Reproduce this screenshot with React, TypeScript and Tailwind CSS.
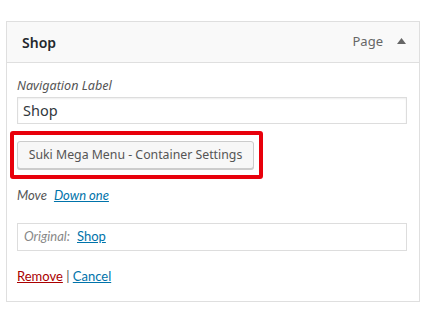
import React from 'react';

const font = { fontFamily: "'Noto Sans', 'Open Sans', sans-serif" };
const lato = { fontFamily: "Lato, 'Noto Sans', sans-serif" };

const MenuItemPanel = () => {
    return (
        <div className="min-h-[310px] bg-white pt-[21px] pl-[6px]" style={font}>
            <div className="w-[414px] border border-[#dfdfdf] bg-white">
                <div className="h-[41px] flex items-center justify-between bg-[#f9f9f9] border-b border-[#dfdfdf] pl-[15px] pr-[13px]">
                    <span className="text-[14px] font-semibold text-[#23282d]">Shop</span>
                    <div className="flex items-center gap-[14px]">
                        <span className="text-[13px] text-[#666]">Page</span>
                        <svg width="9" height="6" viewBox="0 0 9 6" className="mb-[2px]">
                            <path d="M0 6 L4.5 0 L9 6 Z" fill="#666" />
                        </svg>
                    </div>
                </div>

                <div className="px-[10px] pt-[13px] pb-[15px]">
                    <label className="block text-[12.6px] italic leading-[19px] text-[#555]">Navigation Label</label>
                    <div className="mt-[2px] h-[27px] w-[390px] border border-[#ddd] flex items-center px-[5px] text-[14.5px] text-[#32373c] shadow-[inset_0_1px_2px_rgba(0,0,0,0.07)]">
                        Shop
                    </div>

                    <div className="mt-[7px] -ml-[7px] w-[253px] border-[4px] border-[#e8000b] rounded-[3px] pt-[6px] pb-[6px] pl-[3px] pr-[5px]">
                        <button className="h-[28px] w-[237px] border border-[#ccc] rounded-[3px] bg-[#f7f7f7] text-[12.3px] text-[#555] shadow-[0_1px_0_#ccc]">
                            Suki Mega Menu - Container Settings
                        </button>
                    </div>

                    <p className="mt-[6px] text-[13px] leading-[20px] italic text-[#555]" style={lato}>
                        Move <a href="#" className="ml-[4px] text-[#0073aa] underline">Down one</a>
                    </p>

                    <div className="mt-[18px] h-[28px] w-[390px] border border-[#ddd] flex items-center px-[6px] text-[13px]" style={lato}>
                        <span className="italic text-[#888]">Original:</span>
                        <a href="#" className="ml-[7px] text-[#0073aa] underline">Shop</a>
                    </div>

                    <p className="mt-[15px] text-[13px] leading-[20px] text-[#555]" style={lato}>
                        <a href="#" className="text-[#a00] underline">Remove</a> | <a href="#" className="text-[#0073aa] underline">Cancel</a>
                    </p>
                </div>
            </div>
        </div>
    );
};

export default MenuItemPanel;
